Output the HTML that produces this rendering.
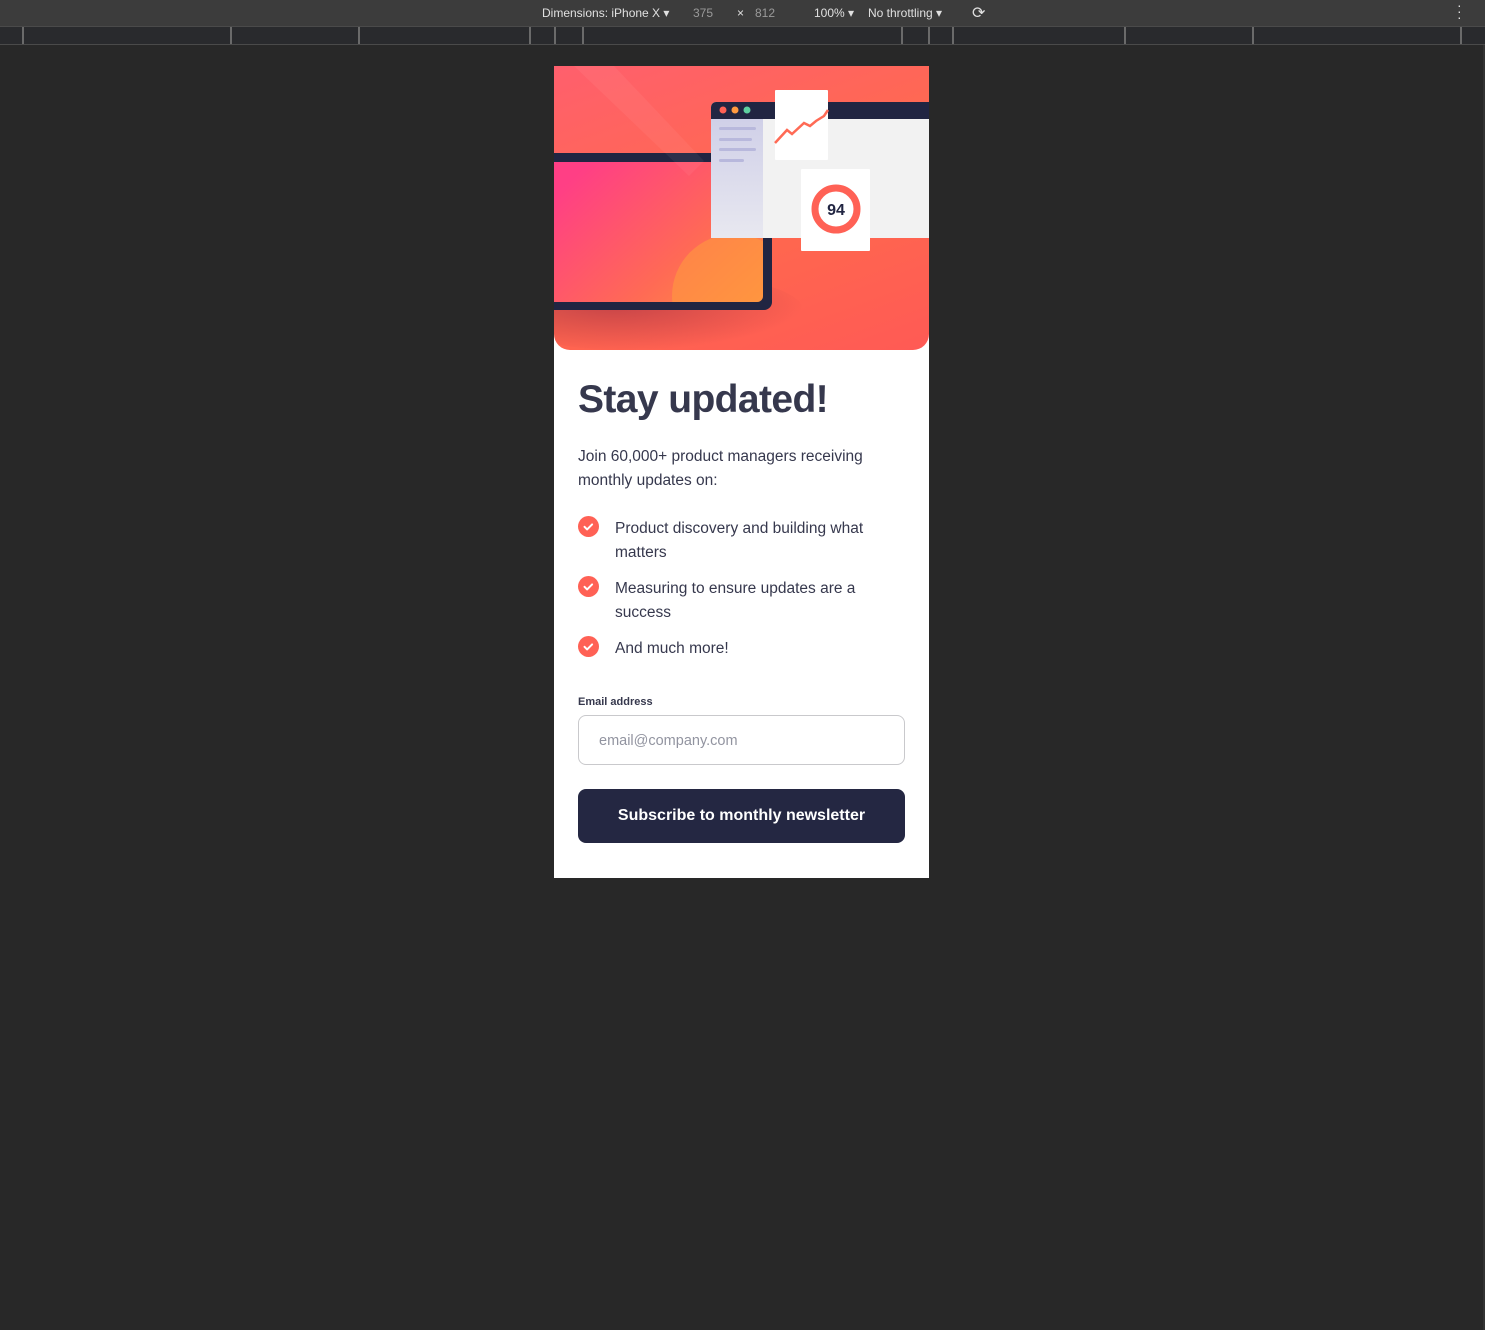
<!DOCTYPE html>
<html><head><meta charset="utf-8"><style>
*{margin:0;padding:0;box-sizing:border-box}
body{width:1485px;height:1330px;background:#282828;font-family:"Liberation Sans",sans-serif;position:relative;overflow:hidden}
.tb{position:absolute;left:0;top:0;width:1485px;height:26px;background:#3c3c3c;color:#e0e0e0;font-size:12px}
.tb span{position:absolute;top:6px}
.ru{position:absolute;left:0;top:26px;width:1485px;height:19px;background:#292a2d;border-bottom:1px solid #4a4a4a;border-top:1px solid #4a4a4a}
.ru i{position:absolute;top:0;width:2px;height:17px;background:#6a6a6a}
.card{position:absolute;left:554px;top:66px;width:375px;height:812px;background:#fff}
.hero{position:absolute;left:0;top:0;width:375px;height:284px;border-radius:0 0 16px 16px;overflow:hidden;background:linear-gradient(160deg,#ff5f6d 0%,#ff6a4d 50%,#ff5a55 100%)}
.h1{position:absolute;left:24px;top:312px;font-size:39px;font-weight:bold;color:#36384d;letter-spacing:-0.6px}
.p{position:absolute;left:24px;font-size:15.5px;line-height:24px;color:#36384d}
.ck{position:absolute;left:24px;width:21px;height:21px;border-radius:50%;background:#ff6155}
.ck svg{position:absolute;left:0;top:0}
.lbl{position:absolute;left:24px;top:630px;font-size:11px;font-weight:bold;color:#36384d}
.in{position:absolute;left:24px;top:649px;width:327px;height:50px;border:1px solid #c9c9cc;border-radius:8px;font-size:14.5px;color:#9294a0;padding:17px 0 0 20px}
.btn{position:absolute;left:24px;top:723px;width:327px;height:54px;background:#242742;border-radius:8px;color:#fff;font-size:16px;font-weight:bold;text-align:center;line-height:53px}
</style></head><body>
<div class="tb">
<span style="left:542px">Dimensions: iPhone X ▾</span>
<span style="left:693px;color:#9a9a9a">375</span>
<span style="left:737px">×</span>
<span style="left:755px;color:#9a9a9a">812</span>
<span style="left:814px">100% ▾</span>
<span style="left:868px">No throttling ▾</span>
<span style="left:972px;top:3px;font-size:16px">⟳</span>
<span style="left:1457px;top:2px;font-size:14px;line-height:6px">·<br>·<br>·</span>
</div>
<div class="ru"><i style="left:22px"></i><i style="left:230px"></i><i style="left:358px"></i><i style="left:529px"></i><i style="left:554px"></i><i style="left:582px"></i><i style="left:901px"></i><i style="left:928px"></i><i style="left:952px"></i><i style="left:1124px"></i><i style="left:1252px"></i><i style="left:1460px"></i></div>
<div style="position:absolute;left:1483px;top:45px;width:2px;height:1285px;background:#333"></div>
<div class="card">
<div class="hero">
<svg width="375" height="284" viewBox="0 0 375 284">
<defs>
<linearGradient id="sc" x1="0" y1="0.3" x2="1" y2="1"><stop offset="0" stop-color="#ff3f85"/><stop offset="0.6" stop-color="#ff6a55"/><stop offset="1" stop-color="#ff9040"/></linearGradient>
<radialGradient id="sh" cx="0.4" cy="0.4" r="0.6"><stop offset="0" stop-color="#8a2040" stop-opacity="0.5"/><stop offset="1" stop-color="#8a2040" stop-opacity="0"/></radialGradient>
<linearGradient id="sb" x1="0" y1="0" x2="0" y2="1"><stop offset="0" stop-color="#d0d0e8"/><stop offset="1" stop-color="#e8e8f0"/></linearGradient>
<clipPath id="scr"><rect x="-10" y="96" width="219" height="140" rx="6"/></clipPath>
</defs>
<ellipse cx="90" cy="245" rx="160" ry="40" fill="url(#sh)"/>
<rect x="-10" y="87" width="228" height="157" rx="8" fill="#212542"/>
<rect x="-10" y="96" width="219" height="140" rx="6" fill="url(#sc)"/>
<g clip-path="url(#scr)"><circle cx="180" cy="230" r="62" fill="#ff9a40" opacity="0.6"/></g>
<polygon points="20,0 60,0 150,95 135,110" fill="#fff" opacity="0.05"/>
<rect x="157" y="36" width="230" height="136" rx="5" fill="#f2f2f2"/>
<path d="M157 41a5 5 0 0 1 5-5h225v17H157z" fill="#212542"/>
<rect x="157" y="53" width="52" height="119" fill="url(#sb)"/>
<circle cx="169" cy="44" r="3.5" fill="#ff6155"/><circle cx="181" cy="44" r="3.5" fill="#ff9a40"/><circle cx="193" cy="44" r="3.5" fill="#5fd0a0"/>
<rect x="165" y="61" width="37" height="3" rx="1.5" fill="#b8b8dc"/>
<rect x="165" y="72" width="33" height="3" rx="1.5" fill="#b8b8dc"/>
<rect x="165" y="82" width="37" height="3" rx="1.5" fill="#b8b8dc"/>
<rect x="165" y="93" width="25" height="3" rx="1.5" fill="#b8b8dc"/>
<rect x="221" y="24" width="53" height="70" rx="1" fill="#fff"/>
<path d="M221 77 L233 64 L238 68 L250 57 L256 60 L262 55 L270 50 L274 44" stroke="#ff6a55" stroke-width="2.5" fill="none"/>
<rect x="247" y="103" width="69" height="82" rx="1" fill="#fff"/>
<circle cx="282" cy="143" r="21" fill="none" stroke="#ff6155" stroke-width="7"/>
<text x="282" y="149" text-anchor="middle" font-family="Liberation Sans" font-weight="bold" font-size="16" fill="#212542">94</text>
</svg>
</div>
<div class="h1">Stay updated!</div>
<div class="p" style="top:379px">Join 60,000+ product managers receiving<br>monthly updates on:</div>
<div class="ck" style="top:450px"><svg width="21" height="21"><path d="M6.5 10.8l2.6 2.6 5-5" stroke="#fff" stroke-width="2" fill="none" stroke-linecap="round" stroke-linejoin="round"/></svg></div>
<div class="p" style="left:61px;top:451px">Product discovery and building what<br>matters</div>
<div class="ck" style="top:510px"><svg width="21" height="21"><path d="M6.5 10.8l2.6 2.6 5-5" stroke="#fff" stroke-width="2" fill="none" stroke-linecap="round" stroke-linejoin="round"/></svg></div>
<div class="p" style="left:61px;top:511px">Measuring to ensure updates are a<br>success</div>
<div class="ck" style="top:570px"><svg width="21" height="21"><path d="M6.5 10.8l2.6 2.6 5-5" stroke="#fff" stroke-width="2" fill="none" stroke-linecap="round" stroke-linejoin="round"/></svg></div>
<div class="p" style="left:61px;top:571px">And much more!</div>
<div class="lbl">Email address</div>
<div class="in">email@company.com</div>
<div class="btn">Subscribe to monthly newsletter</div>
</div>
</body></html>
